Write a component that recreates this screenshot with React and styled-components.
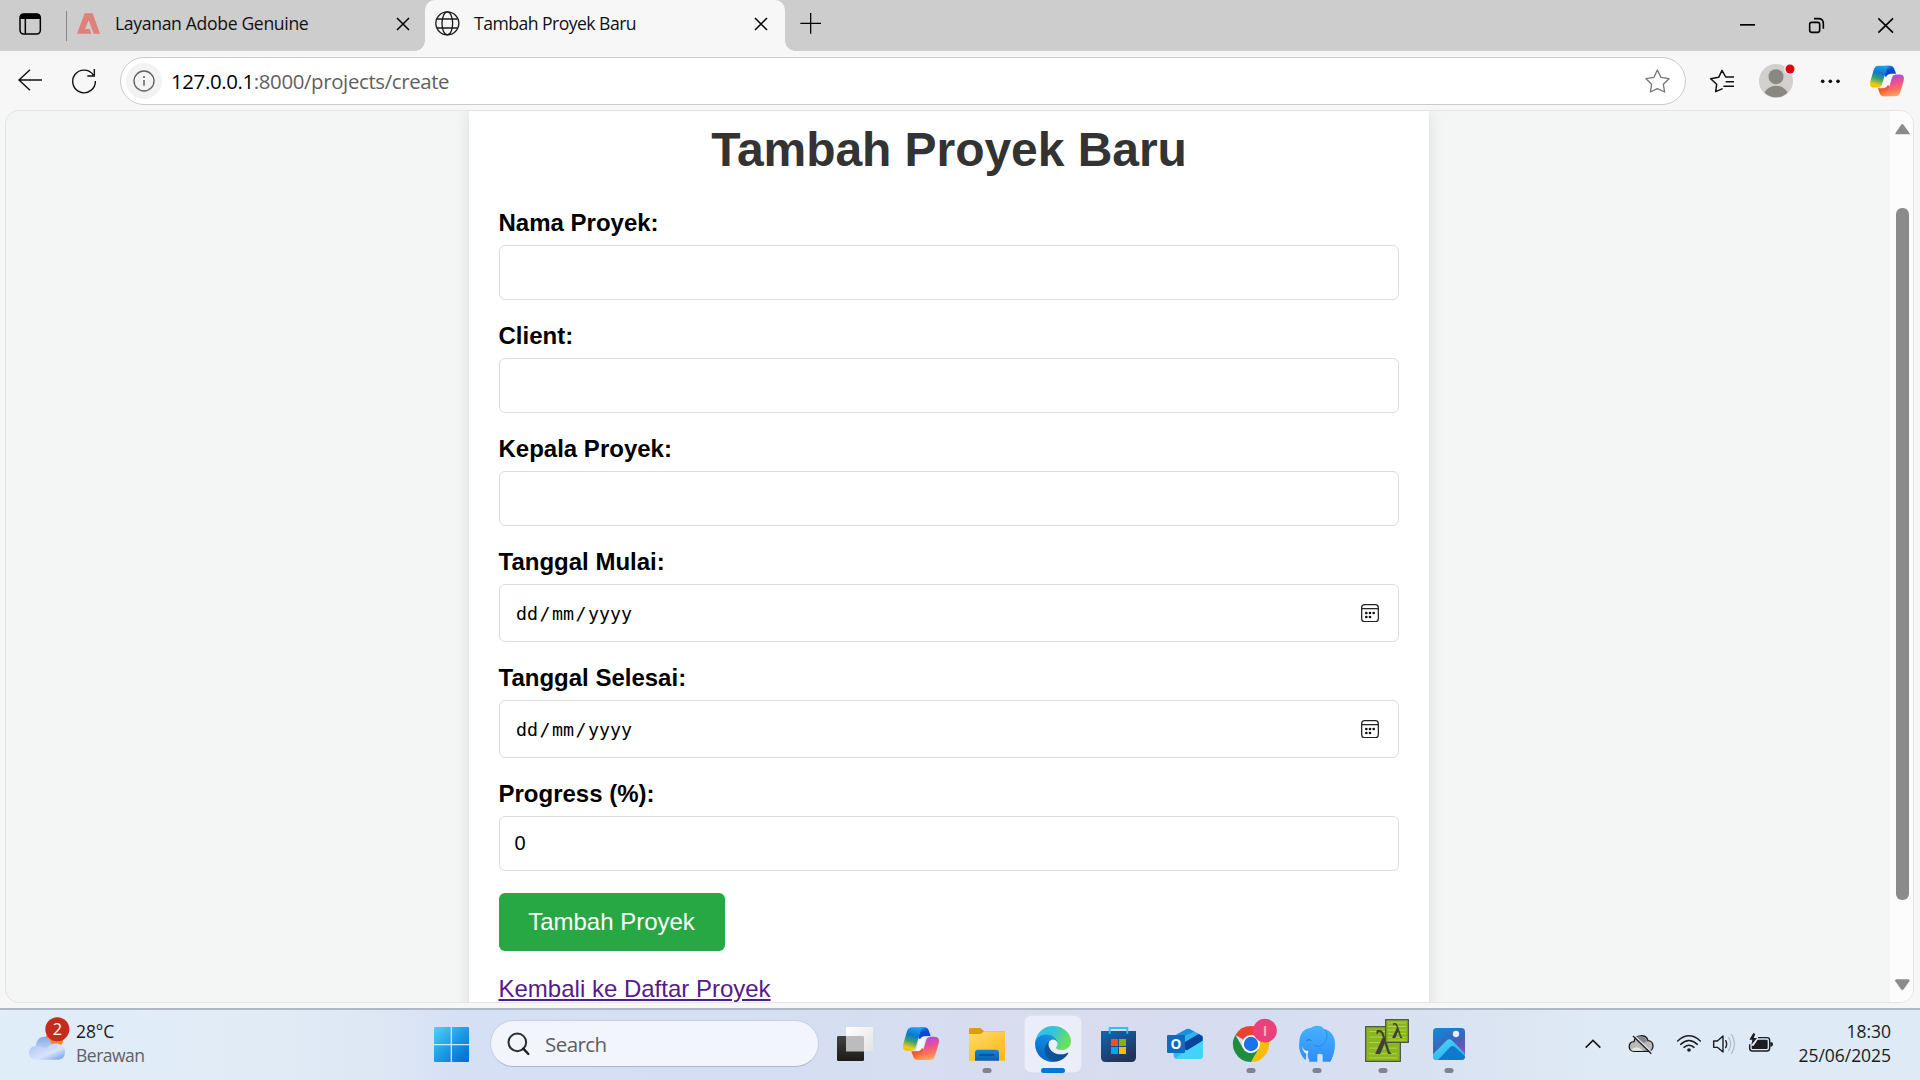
import React from "react";
import styled, { createGlobalStyle } from "styled-components";

const Global = createGlobalStyle`
  * { box-sizing: border-box; }
  body { margin: 0; overflow: hidden; background: #f7f7f7; }
`;

const ui = `"Open Sans", "Noto Sans", sans-serif`;
const page = `"Liberation Sans", Arial, sans-serif`;

const Screen = styled.div`
  width: 1920px;
  height: 1080px;
  display: flex;
  flex-direction: column;
  background: #f7f7f7;
  font-family: ${ui};
  overflow: hidden;
`;

const Svg = styled.svg`
  display: block;
  flex: none;
  fill: none;
`;

/* Icon whose drawing units are a third of a pixel */
const Icon = ({ x, y, w, h, children }) => (
  <Svg width={w / 3} height={h / 3} viewBox={`${x} ${y} ${w} ${h}`}>{children}</Svg>
);

const TabStrip = styled.div`
  height: 51px;
  flex: none;
  display: flex;
  background: #cdcdcd;
`;

const Divider = styled.div`
  width: 1px;
  height: 30px;
  margin: 11px 0 0;
  background: #868686;
`;

const Tab = styled.div`
  position: relative;
  display: flex;
  align-items: center;
  width: ${(p) => p.$width}px;
  height: 51px;
  padding: 0 ${(p) => (p.$active ? "17px 3px 10px" : "15px 3px 10px")};
  background: ${(p) => (p.$active ? "#f7f7f7" : "transparent")};
  border-radius: 10px 10px 0 0;
  ${(p) =>
    p.$active &&
    `
    &::before, &::after {
      content: "";
      position: absolute;
      bottom: 0;
      width: 10px;
      height: 10px;
    }
    &::before { left: -10px; background: radial-gradient(circle at 0 0, transparent 9.5px, #f7f7f7 10px); }
    &::after { right: -10px; background: radial-gradient(circle at 100% 0, transparent 9.5px, #f7f7f7 10px); }
  `}
`;

const TabTitle = styled.span`
  flex: 1;
  margin-left: ${(p) => p.$gap}px;
  padding-bottom: 2px;
  font-size: 17.6px;
  line-height: 24px;
  letter-spacing: ${(p) => p.$track}px;
  color: #111;
  white-space: nowrap;
`;

const Spacer = styled.div`
  flex: 1;
`;

const Toolbar = styled.div`
  height: 59px;
  flex: none;
  display: flex;
`;

const Address = styled.div`
  flex: 1;
  height: 48px;
  margin: 6px 9px 0 9px;
  display: flex;
  align-items: center;
  padding: 0 0 0 5px;
  background: #fff;
  border: 1px solid #cbcbcb;
  border-radius: 24px;
`;

const InfoBadge = styled.div`
  width: 36px;
  height: 36px;
  border-radius: 50%;
  background: #f3f3f3;
`;

const Url = styled.span`
  flex: 1;
  margin-left: 9px;
  font-size: 20.4px;
  line-height: 28px;
  letter-spacing: -0.36px;
  color: #5f5f5f;
  b { font-weight: 400; color: #000; }
`;

const Viewport = styled.div`
  width: 1909px;
  height: 893px;
  flex: none;
  margin-left: 5px;
  display: flex;
  border: 1px solid #e3e4e4;
  border-radius: 14px;
  background: #f4f6f6;
  overflow: hidden;
`;

const Page = styled.main`
  flex: 1;
  display: flex;
  justify-content: center;
  overflow: hidden;
  font-family: ${page};
`;

const Card = styled.form`
  width: 960px;
  height: 960px;
  padding: 11px 30px 0;
  margin-right: -1px;
  background: #fff;
  box-shadow: 0 0 15px rgba(0, 0, 0, 0.1);
`;

const Heading = styled.h1`
  margin: 0 0 32px;
  padding-left: 1px;
  font-size: 48px;
  line-height: 55px;
  letter-spacing: -0.06px;
  text-align: center;
  color: #333;
`;

const Label = styled.label`
  display: block;
  margin-bottom: 9px;
  font-size: 24px;
  font-weight: 700;
  line-height: 27px;
  color: #000;
`;

const Field = styled.div`
  display: flex;
  align-items: center;
  justify-content: space-between;
  height: ${(p) => (p.$date ? 58 : 55)}px;
  margin-bottom: 22px;
  padding: 0 19px 0 15px;
  border: 1px solid #ddd;
  border-radius: 6px;
  font-size: 20px;
  line-height: 23px;
  color: #000;
`;

const DateText = styled.span`
  display: flex;
  gap: 1.5px;
  padding-left: 1.5px;
  font-family: "DejaVu Sans Mono", monospace;
  font-size: 18.27px;
`;

const Submit = styled.button`
  display: block;
  width: 226px;
  height: 58px;
  margin: 0 0 24px;
  padding: 0 0 2px;
  border: 0;
  border-radius: 6px;
  background: #28a745;
  color: #fff;
  font: 24px/27px ${page};
`;

const BackLink = styled.a`
  font-size: 24px;
  line-height: 27px;
  color: #551a8b;
  text-decoration: underline;
`;

const Scrollbar = styled.div`
  width: 23px;
  padding-left: 1px;
  display: flex;
  flex-direction: column;
  align-items: center;
  background: #fcfcfc;
`;

const Thumb = styled.div`
  width: 13px;
  height: 692px;
  margin: 73px 0 78px;
  border-radius: 6px;
  background: #8b8b8b;
`;

const Taskbar = styled.footer`
  height: 72px;
  flex: none;
  margin-top: 5px;
  display: flex;
  border-top: 2px solid #b0b7c5;
  background: linear-gradient(90deg, #dfedf8 0, #e1ebf6 15%, #dde7f4 20%, #d5e0f5 24%, #d5def1 45%, #d8dcee 55%, #d5ddf1 66%, #d9e2f1 75%, #deeaf5 83%, #deebf7 100%);
`;

const Weather = styled.div`
  width: 423px;
  display: flex;
`;

const Lines = styled.div`
  display: flex;
  flex-direction: column;
  align-items: ${(p) => (p.$end ? "flex-end" : "flex-start")};
  width: ${(p) => (p.$end ? "111px" : "auto")};
  margin-right: ${(p) => (p.$end ? 29 : 0)}px;
  margin-left: ${(p) => (p.$end ? 0 : -1)}px;
  padding-top: 9px;
  font-size: 17.5px;
  line-height: 24px;
  letter-spacing: ${(p) => (p.$end ? -0.04 : -0.1)}px;
  color: #1a1c1f;
`;

const Muted = styled.span`
  letter-spacing: -0.5px;
  color: #5d6166;
`;

const Search = styled.div`
  width: 329px;
  height: 47px;
  margin: 10px 8px 0 11px;
  display: flex;
  align-items: center;
  border: 1.5px solid #c5cfe3;
  border-bottom-color: #abb7cd;
  border-radius: 24px;
  background: #f2f5fc;
  font-size: 20.5px;
  letter-spacing: -0.55px;
  color: #5b5e64;
`;

const Apps = styled.div`
  display: flex;
  gap: 10px;
  padding-top: 6px;
`;

const Tile = styled.div`
  position: relative;
  width: 56px;
  height: 56px;
  border-radius: 6px;
  background: ${(p) => (p.$active ? "#ebeef8" : "transparent")};
  box-shadow: ${(p) => (p.$active ? "0 0 0 1px #dfe3f0, 0 1px 1px #b9c0d2" : "none")};
  &::after {
    content: "";
    position: absolute;
    left: 50%;
    bottom: -1px;
    transform: translateX(-50%);
    width: ${(p) => (p.$active ? 24 : p.$open ? 9 : 0)}px;
    height: 5px;
    border-radius: 3px;
    background: ${(p) => (p.$active ? "#0078d4" : "#7f848f")};
  }
`;

const Tray = styled.div`
  display: flex;
`;

const Lg = ({ id, stops, x1 = 0, y1 = 0, x2 = 0, y2 = 1 }) => (
  <linearGradient id={id} x1={x1} y1={y1} x2={x2} y2={y2}>
    {stops.map(([o, c]) => <stop key={o} offset={o} stopColor={c} />)}
  </linearGradient>
);

const Copilot = ({ id }) => {
  const ribbon = "M276 82H315C303 84 301 94 297 108L288 139C285 150 280 152 270 152H262C248 152 247 141 251 128L261 94C264 85 269 82 276 82Z";
  const fold = "M298 82H313C322 82 325 87 328 97L332 108H319C309 108 304 110 300 118L295 114L300 92Z";
  return (
    <>
      <defs>
        <Lg id={id + "a"} x1={0.6} x2={0.35} stops={[[0, "#17a5ef"], [0.35, "#0d77cf"], [0.62, "#3aa371"], [0.9, "#f2cd10"], [1, "#ffb900"]]} />
        <Lg id={id + "b"} x1={0.3} x2={0.7} stops={[[0, "#1791e8"], [0.4, "#1048d4"], [1, "#1a3ec4"]]} />
        <Lg id={id + "c"} x1={0.35} x2={0.6} stops={[[0, "#ffb05c"], [0.3, "#f9735f"], [0.6, "#ee4f92"], [1, "#9b4ff0"]]} />
        <Lg id={id + "d"} x1={0.3} x2={0.7} stops={[[0, "#ffa04d"], [0.5, "#f4622f"], [1, "#e8452b"]]} />
      </defs>
      <path d="M299 110H318L307 152H288Z" fill="#f6f7fc" />
      <path d={fold} fill={`url(#${id}b)`} />
      <path d={ribbon} fill={`url(#${id}a)`} />
      <g transform="rotate(180 303 131)">
        <path d={fold} fill={`url(#${id}d)`} />
        <path d={ribbon} fill={`url(#${id}c)`} />
      </g>
    </>
  );
};

const Close = () => (
  <Icon x={0} y={0} w={42} h={42}>
    <path d="M3 3L39 39M39 3L3 39" stroke="#000" strokeWidth="4.5" />
  </Icon>
);

const Calendar = () => (
  <Icon x={183} y={131} w={54} h={54}>
    <rect x="185" y="133" width="50" height="51" rx="9" stroke="#222" strokeWidth="3.8" />
    <path d="M185 145H235" stroke="#222" strokeWidth="3.8" />
    {[[199, 158], [210, 158], [221, 158], [199, 170], [210, 170]].map(([a, b]) => <circle key={a + "-" + b} cx={a} cy={b} r="4" fill="#111" />)}
  </Icon>
);

const DateInput = () => (
  <Field $date>
    <DateText><span>dd</span><span>/</span><span>mm</span><span>/</span><span>yyyy</span></DateText>
    <Calendar />
  </Field>
);

const Browser = () => (
  <>
    <TabStrip>
      <Icon x={0} y={0} w={198} h={153}>
        <rect x="60" y="42" width="61" height="60" rx="11" stroke="#000" strokeWidth="4.5" />
        <path d="M60 57V51Q60 41 71 41H110Q121 41 121 51V57Z" fill="#000" />
        <path d="M76 57V101" stroke="#000" strokeWidth="4.5" />
      </Icon>
      <Divider />
      <Tab $width={358}>
        <Icon x={232} y={40} w={69} h={69}>
          <path d="M255 41H279L301 102H282L267 62L256 88H270L275 102H232Z" fill="#df8079" />
        </Icon>
        <TabTitle $gap={15} $track={-0.34}>Layanan Adobe Genuine</TabTitle>
        <Close />
      </Tab>
      <Tab $width={360} $active>
        <Icon x={104} y={35} w={75} h={81}>
          <g stroke="#1b1b1b" strokeWidth="4">
            <circle cx="141" cy="72" r="34.5" />
            <ellipse cx="141" cy="72" rx="16" ry="34.5" />
            <path d="M110 59H172M110 86H172" />
          </g>
        </Icon>
        <TabTitle $gap={14} $track={-0.53}>Tambah Proyek Baru</TabTitle>
        <Close />
      </Tab>
      <Icon x={1155} y={0} w={153} h={153}>
        <path d="M1201 70H1263M1232 39V101" stroke="#000" strokeWidth="3.8" />
      </Icon>
      <Spacer />
      <Icon x={339} y={0} w={207} h={153}>
        <path d="M420 74.5H465" stroke="#000" strokeWidth="5" />
      </Icon>
      <Icon x={546} y={0} w={207} h={153}>
        <rect x="629" y="67" width="30" height="30" rx="6" stroke="#000" strokeWidth="4.8" />
        <path d="M642 56H655Q670 56 670 71V86" stroke="#000" strokeWidth="4.8" />
      </Icon>
      <Icon x={753} y={0} w={207} h={153}>
        <path d="M835 55L879 98M879 55L835 98" stroke="#000" strokeWidth="4.8" />
      </Icon>
    </TabStrip>
    <Toolbar>
      <Icon x={0} y={153} w={171} h={177}>
        <path d="M126 240H57M90 209L57 240L90 271" stroke="#111" strokeWidth="4.2" />
      </Icon>
      <Icon x={171} y={153} w={162} h={177}>
        <path d="M280 225A34 34 0 1 0 286 243M283 207V228H262" stroke="#111" strokeWidth="4.2" />
      </Icon>
      <Address>
        <InfoBadge>
          <Icon x={378} y={189} w={108} h={108}>
            <circle cx="432" cy="243" r="30" stroke="#616161" strokeWidth="4" />
            <path d="M432 240V257" stroke="#616161" strokeWidth="4.5" />
            <circle cx="432" cy="231" r="3" fill="#616161" />
          </Icon>
        </InfoBadge>
        <Url><b>127.0.0.1</b>:8000/projects/create</Url>
        <Icon x={132} y={201} w={123} h={84}>
          <path d="M172 210L183 232L207 236L190 253L194 276L172 266L151 276L155 253L138 236L162 232Z" stroke="#777" strokeWidth="4" strokeLinejoin="round" />
        </Icon>
      </Address>
      <Icon x={285} y={153} w={162} h={177}>
        <path d="M368 266L347 275L350 253L332 236L356 232L366 211L377 231H402M377 245H402M370 259H402" stroke="#111" strokeWidth="4.4" strokeLinejoin="round" />
      </Icon>
      <Icon x={447} y={153} w={162} h={177}>
        <clipPath id="face"><circle cx="528" cy="243" r="49" /></clipPath>
        <circle cx="528" cy="243" r="51" fill="#d2d0ce" />
        <g clipPath="url(#face)" fill="#8a8783">
          <circle cx="528" cy="230" r="22.5" />
          <ellipse cx="528" cy="293" rx="38" ry="36" />
        </g>
        <circle cx="570" cy="207" r="17" fill="#f7f7f7" />
        <circle cx="570" cy="207" r="13.5" fill="#e3000b" />
      </Icon>
      <Icon x={609} y={153} w={162} h={177}>
        <g fill="#111"><circle cx="668" cy="244" r="5.5" /><circle cx="691" cy="244" r="5.5" /><circle cx="714" cy="244" r="5.5" /></g>
      </Icon>
      <Icon x={771} y={153} w={189} h={177}>
        <g transform="translate(861 243) scale(.94) translate(-303 -131)"><Copilot id="top" /></g>
      </Icon>
    </Toolbar>
  </>
);

const PageView = () => (
  <Viewport>
    <Page>
      <Card>
        <Heading>Tambah Proyek Baru</Heading>
        <Label>Nama Proyek:</Label>
        <Field />
        <Label>Client:</Label>
        <Field />
        <Label>Kepala Proyek:</Label>
        <Field />
        <Label>Tanggal Mulai:</Label>
        <DateInput />
        <Label>Tanggal Selesai:</Label>
        <DateInput />
        <Label>Progress (%):</Label>
        <Field>0</Field>
        <Submit type="button">Tambah Proyek</Submit>
        <BackLink>Kembali ke Daftar Proyek</BackLink>
      </Card>
    </Page>
    <Scrollbar>
      <Icon x={873} y={333} w={69} h={72}>
        <path d="M903 375Q907 369 911 375L928 398Q931 403 925 403H890Q884 403 887 398Z" fill="#8b8b8b" />
      </Icon>
      <Thumb />
      <Icon x={993} y={84} w={69} h={45}>
        <path d="M1009 88H1045Q1051 89 1048 94L1031 118Q1027 123 1023 118L1006 94Q1003 89 1009 88Z" fill="#8b8b8b" />
      </Icon>
    </Scrollbar>
  </Viewport>
);

const Elephant = () => (
  <>
    <defs><Lg id="el" stops={[[0, "#45b3ff"], [1, "#2f8df6"]]} /></defs>
    <path d="M448 126C448 100 464 84 482 84C493 76 514 74 522 87C542 91 555 108 555 132C555 154 548 174 541 185H518V164Q508 158 502 164V185H478C470 176 473 166 474 150C468 160 466 172 469 181C453 171 445 149 448 126Z" fill="url(#el)" />
    <path d="M524 88C537 100 531 128 514 137C505 141 497 139 492 134" stroke="#2a86dc" strokeWidth="2.6" />
    <path d="M469 122Q477 116 484 122" stroke="#1d6fc0" strokeWidth="3" />
    <path d="M456 137Q461 154 475 153L473 162Q459 160 456 137Z" fill="#e9f4ff" />
    <path d="M471 156L467 183H479L473 170Z" fill="#d8ddf0" />
  </>
);

const LambdaTile = ({ x, y, s, size, textY }) => (
  <>
    <rect x={x} y={y} width={s} height={s} fill="#8ab81c" stroke="#4a4b3f" strokeWidth="3.5" />
    <path
      d={[0.14, 0.3, 0.46, 0.62, 0.78, 0.9].map((f) => `M${x + s * 0.1} ${y + s * f}H${x + s * 0.9}`).join("")}
      stroke="#b9d660" strokeWidth="2.6"
    />
    <text x={x + s / 2} y={textY} textAnchor="middle" fontFamily="Liberation Serif, serif" fontWeight="700" fontSize={size} fill="#3f4036">λ</text>
  </>
);

const Bar = () => (
  <Taskbar>
    <Weather>
      <Icon x={0} y={90} w={231} h={210}>
        <defs>
          <Lg id="cl" stops={[[0, "#86a9e8"], [0.6, "#b9cff5"], [1, "#7da4ec"]]} />
          <Lg id="cl2" x2={1} stops={[[0, "#a9c4f2"], [0.6, "#d7e3fb"], [1, "#6f97e6"]]} />
        </defs>
        <circle cx="163" cy="178" r="27" fill="#f58220" />
        <path d="M107 204C107 160 150 162 155 192L150 230H110Z" fill="url(#cl)" />
        <path d="M108 239C80 239 80 198 108 198C124 198 132 204 140 206C148 184 195 184 195 215C195 233 184 239 172 239Z" fill="url(#cl2)" />
        <circle cx="172" cy="148" r="36" fill="#c42b1c" />
        <text x="172" y="165" textAnchor="middle" fontFamily="Open Sans, sans-serif" fontSize="49" fill="#fff">2</text>
      </Icon>
      <Lines><span>28°C</span><Muted>Berawan</Muted></Lines>
    </Weather>
    <Apps>
      <Tile>
        <Icon x={9} y={48} w={168} h={168}>
          <defs><Lg id="win" x2={1} stops={[[0, "#4fd2ff"], [0.5, "#1c9be6"], [1, "#0069cf"]]} /></defs>
          <path d="M45 81H92V132H42V84Q42 81 45 81ZM96 81H144Q147 81 147 84V132H96ZM42 136H92V186H45Q42 186 42 183ZM96 136H147V183Q147 186 144 186H96Z" fill="url(#win)" />
        </Icon>
      </Tile>
    </Apps>
    <Search>
      <Icon x={214} y={63} w={162} h={138}>
        <circle cx="293" cy="127" r="26.5" stroke="#2b2d2e" strokeWidth="6" />
        <path d="M311 146L326 162" stroke="#1d1f20" strokeWidth="7" strokeLinecap="round" />
      </Icon>
      <span>Search</span>
    </Search>
    <Apps>
      <Tile>
        <Icon x={21} y={48} w={168} h={168}>
          <defs>
            <Lg id="tv" stops={[[0, "#42423f"], [1, "#1b1b19"]]} />
            <Lg id="tw" x2={1} stops={[[0, "#fff"], [1, "#e3e3e3"]]} />
          </defs>
          <rect x="51" y="108" width="81" height="75" rx="4" fill="url(#tv)" />
          <rect x="78" y="81" width="81" height="73" rx="3" fill="url(#tw)" />
          <path d="M78 108H128Q132 108 132 112V154H78Z" fill="#bcbcbc" />
        </Icon>
      </Tile>
      <Tile><Icon x={219} y={48} w={168} h={168}><Copilot id="bot" /></Icon></Tile>
      <Tile $open>
        <Icon x={417} y={48} w={168} h={168}>
          <defs>
            <Lg id="fo" x2={0.7} stops={[[0, "#ffdc70"], [1, "#fcb916"]]} />
            <Lg id="fb" stops={[[0, "#1184d8"], [1, "#0a60b4"]]} />
          </defs>
          <path d="M447 110V88Q447 84 451 84H478Q482 84 486 88L492 93H551Q555 93 555 97V110Z" fill="#dd9c0a" />
          <path d="M447 102H480Q485 102 489 97L492 94H551Q555 94 555 98V182H447Z" fill="url(#fo)" />
          <path d="M465 182V158Q465 149 474 149H528Q537 149 537 158V182Z" fill="url(#fb)" />
          <path d="M480 165H522" stroke="#06488c" strokeWidth="4" strokeLinecap="round" />
        </Icon>
      </Tile>
      <Tile $active>
        <Icon x={615} y={48} w={168} h={168}>
          <defs>
            <Lg id="e1" x2={1} y2={0} stops={[[0, "#0c59a4"], [1, "#114a8b"]]} />
            <Lg id="e2" x1={0.8} x2={0.3} stops={[[0, "#1b9de2"], [0.5, "#0f7fd8"], [1, "#0a5fc0"]]} />
            <Lg id="e3" x2={1} y2={0.4} stops={[[0, "#35c1f1"], [0.5, "#2fc3df"], [1, "#6be05a"]]} />
          </defs>
          <g transform="translate(645 78) scale(.422) translate(-4.63 -4.92)">
            <path fill="url(#e1)" d="M235.68 195.46a93.73 93.73 0 0 1-10.54 4.71 101.87 101.87 0 0 1-35.9 6.46c-47.32 0-88.54-32.55-88.54-74.32a31.48 31.48 0 0 1 16.43-27.31c-42.8 1.8-53.8 46.4-53.8 72.53 0 73.88 68.09 81.37 82.76 81.37 7.91 0 19.84-2.3 27-4.56l1.31-.44A128.34 128.34 0 0 0 241 201.1a4 4 0 0 0-5.32-5.64Z" />
            <path fill="url(#e2)" d="M110.34 246.34A79.2 79.2 0 0 1 87.6 225a80.72 80.72 0 0 1 29.53-120c3.12-1.47 8.45-4.13 15.54-4a32.35 32.35 0 0 1 25.69 13 31.88 31.88 0 0 1 6.36 18.66c0-.21 24.46-79.6-80-79.6-43.9 0-80 41.66-80 78.21a130.15 130.15 0 0 0 12.11 56 128 128 0 0 0 156.38 67.11 75.55 75.55 0 0 1-62.78-8Z" />
            <path fill="url(#e3)" d="M156.94 153.78c-.81 1.05-3.3 2.5-3.3 5.66 0 2.61 1.7 5.12 4.72 7.23 14.38 10 41.49 8.68 41.56 8.68a59.56 59.56 0 0 0 30.27-8.35 61.38 61.38 0 0 0 30.43-52.88c.26-22.41-8-37.31-11.34-43.91C228.09 28.76 182.35 4.92 132.61 4.92a128 128 0 0 0-128 126.2c.48-36.54 36.8-66.05 80-66.05 3.5 0 23.46.34 42 10.07 16.34 8.58 24.9 18.94 30.85 29.21 6.18 10.67 7.28 24.15 7.28 29.52s-2.74 13.33-7.8 19.91Z" />
          </g>
        </Icon>
      </Tile>
      <Tile>
        <Icon x={813} y={48} w={168} h={168}>
          <defs><Lg id="st" x2={0.5} stops={[[0, "#0f68b4"], [1, "#243457"]]} /></defs>
          <path d="M843 93H948V172Q948 186 934 186H857Q843 186 843 172Z" fill="url(#st)" />
          <path d="M869 101V84H922V101" stroke="#35bff0" strokeWidth="5.5" />
          <path d="M873 117H894V138H873Z" fill="#f25022" />
          <path d="M897 117H918V138H897Z" fill="#7fba00" />
          <path d="M873 141H894V162H873Z" fill="#00a4ef" />
          <path d="M897 141H918V162H897Z" fill="#ffb900" />
        </Icon>
      </Tile>
      <Tile>
        <Icon x={21} y={48} w={168} h={168}>
          <defs><Lg id="ou" x2={1} stops={[[0, "#1490df"], [1, "#52e0fb"]]} /></defs>
          <path d="M71 109L109 88Q114 85 120 88L154 106Q159 109 159 115V166Q159 177 148 177H82Q71 177 71 166Z" fill="url(#ou)" />
          <path d="M71 109L109 88Q114 85 120 88L132 95L82 124H71Z" fill="#1a8fdc" />
          <path d="M84 117L132 95L146 102L101 128Z" fill="#2fb4ee" />
          <path d="M101 128L146 102L157 108Q159 112 158 122L112 151L101 147Z" fill="#0a439b" />
          <path d="M112 151L159 122V166Q159 177 148 177H82L76 174Z" fill="#43d2f8" />
          <rect x="51" y="105" width="54" height="54" rx="4" fill="#0f6cbd" />
          <text x="78" y="147" textAnchor="middle" fontFamily="Open Sans, sans-serif" fontWeight="700" fontSize="41" fill="#fff">O</text>
        </Icon>
      </Tile>
      <Tile $open>
        <Icon x={219} y={48} w={168} h={168}>
          <path d="M303 132L256.2 105A54 54 0 0 1 349.8 105Z" fill="#ea4335" />
          <path d="M303 105H349.8A54 54 0 0 1 303 186L326.4 145.5Z" fill="#fbbc04" />
          <path d="M256.2 105L279.6 145.5Q288 159 303 159L326.4 145.5L303 186A54 54 0 0 1 256.2 105Z" fill="#1e8e3e" />
          <circle cx="303" cy="132" r="27" fill="#fff" />
          <circle cx="303" cy="132" r="21.5" fill="#1a73e8" />
          <circle cx="345" cy="92" r="35.5" fill="#ec407a" />
          <text x="345" y="107" textAnchor="middle" fontFamily="Open Sans, sans-serif" fontWeight="700" fontSize="41" fill="#f7a9c4">I</text>
        </Icon>
      </Tile>
      <Tile $open><Icon x={417} y={48} w={168} h={168}><Elephant /></Icon></Tile>
      <Tile $open>
        <Icon x={615} y={48} w={168} h={168}>
          <LambdaTile x={647} y={80} s={104} size={98} textY={163} />
          <LambdaTile x={707} y={59} s={68} size={62} textY={115} />
        </Icon>
      </Tile>
      <Tile $open>
        <Icon x={813} y={48} w={168} h={168}>
          <defs>
            <Lg id="ph" x1={0.2} x2={0.7} stops={[[0, "#1287d6"], [0.5, "#3e62b8"], [1, "#9a4bb3"]]} />
            <Lg id="pm" x2={0.8} stops={[[0, "#50dcfb"], [1, "#1da5e8"]]} />
          </defs>
          <clipPath id="pc"><rect x="849" y="84" width="96" height="96" rx="11" /></clipPath>
          <g clipPath="url(#pc)">
            <path d="M849 84H945V180H849Z" fill="url(#ph)" />
            <path d="M840 172L889 122Q898 114 907 122L960 176V190H840Z" fill="url(#pm)" />
            <path d="M862 182L900 142Q908 134 916 142L960 184V190H862Z" fill="#0f79cc" />
          </g>
          <circle cx="918" cy="102" r="9.5" fill="#e8ecfb" />
        </Icon>
      </Tile>
    </Apps>
    <Spacer />
    <Tray>
      <Icon x={60} y={180} w={108} h={210}>
        <path d="M77 293L99 271L121 293" stroke="#1b1d20" strokeWidth="5" />
      </Icon>
      <Icon x={168} y={180} w={150} h={210}>
        <path d="M222 304C203 304 203 276 222 275C225 252 259 252 264 272C284 272 284 304 264 304Z" fill="#b9b9b9" stroke="#1b1d20" strokeWidth="4" />
        <path d="M213 300Q226 286 241 296L250 302H220Z" fill="#e8e8e8" />
        <path d="M228 263C238 254 256 260 262 274L250 280Z" fill="#858585" />
        <path d="M222 256L277 309" stroke="#dfe9f4" strokeWidth="4" />
        <path d="M219 258L274 311" stroke="#1b1d20" strokeWidth="4" />
      </Icon>
      <Icon x={318} y={180} w={126} h={210}>
        <path d="M353 273Q387 242 421 273M362 283Q387 260 412 283M372 292Q387 279 402 292" stroke="#1b1d20" strokeWidth="4.5" strokeLinecap="round" />
        <circle cx="387" cy="300" r="5.5" fill="#1b1d20" />
      </Icon>
      <Icon x={444} y={180} w={105} h={210}>
        <path d="M461 273H472L489 258V306L472 292H461Z" stroke="#1b1d20" strokeWidth="4.2" strokeLinejoin="round" />
        <path d="M497 272Q503 282 497 293" stroke="#1b1d20" strokeWidth="4" strokeLinecap="round" />
        <path d="M506 263Q518 282 506 302M515 254Q532 282 515 310" stroke="#b4bfca" strokeWidth="4" strokeLinecap="round" />
      </Icon>
      <Icon x={549} y={180} w={111} h={210}>
        <path d="M594 263H621Q629 263 629 271V295Q629 303 621 303H577Q569 303 569 295V283" stroke="#1b1d20" strokeWidth="4.2" />
        <path d="M593 269H620Q623 269 623 272V294Q623 297 620 297H578Q575 297 575 294V287H581Z" fill="#1b1d20" />
        <path d="M631 276Q639 276 639 283Q639 290 631 290Z" fill="#1b1d20" />
        <path d="M580 249L568 269H577L574 285L591 264H581L586 252Z" fill="#1b1d20" />
      </Icon>
      <Lines $end><span>18:30</span><span>25/06/2025</span></Lines>
    </Tray>
  </Taskbar>
);

export default function App() {
  return (
    <Screen>
      <Global />
      <Browser />
      <PageView />
      <Bar />
    </Screen>
  );
}
